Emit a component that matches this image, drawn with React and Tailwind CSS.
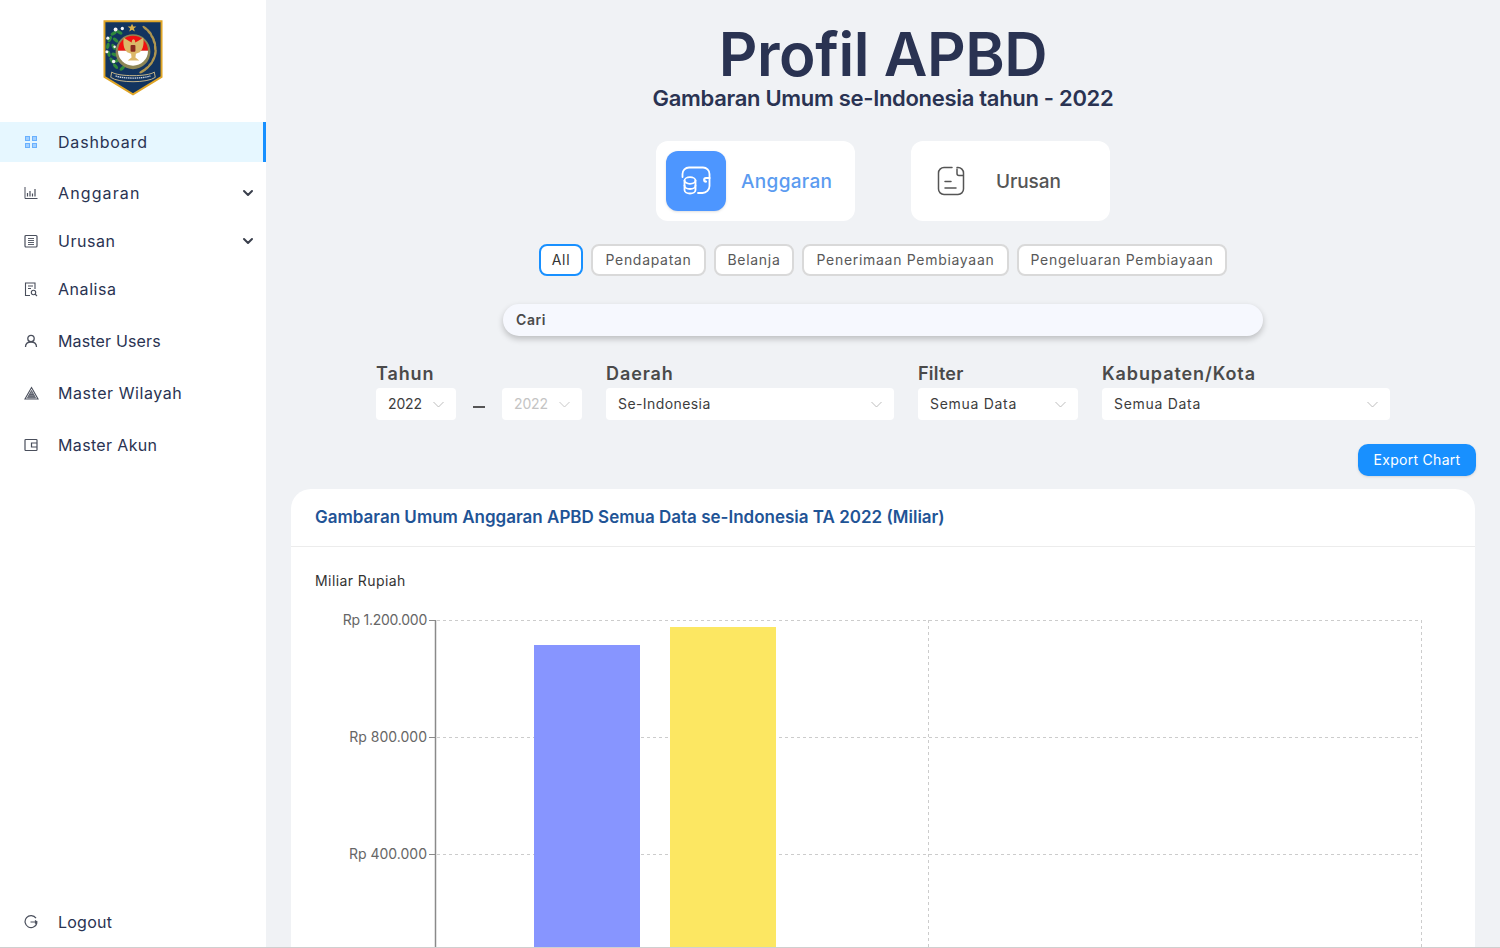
import { ChevronDown } from "lucide-react";

const font = { fontFamily: "Inter, 'Open Sans', sans-serif" };

const greenLeaves = [
  [11, 14, -30], [17, 13, 30], [7, 20, -60], [13, 21, 40], [5, 27, -80], [11, 28, 60],
  [6, 35, 80], [12, 36, 20], [9, 42, 60], [15, 42, -30], [13, 48, 50], [20, 50, -40],
];
const wheat = [
  [44, 9, 40], [48, 13, 50], [51, 18, 60], [53, 23, 70], [54, 29, 85], [54, 35, 100],
  [52, 41, 115], [49, 46, 130], [45, 50, 140], [41, 53, 150],
];
const flowers = [
  [13, 10, 2], [20, 9, 1.7], [5, 19, 1.6], [12, 28, 1.3], [4, 33, 1.6], [11, 43, 1.8], [20, 41, 1.3],
];

function Logo() {
  return (
    <svg width="60" height="78" viewBox="0 0 62 79" className="-mt-[1px]">
      <path d="M1.500 1.500H60.500V59L31 77L1.500 59Z" fill="#12345f" stroke="#e0a526" strokeWidth="2" />
      <path d="M30 4l1.300 3h3.200l-2.600 2 1 3.200L30 10.300l-2.900 1.900 1-3.200-2.600-2h3.200z" fill="#d8b04a" />
      {greenLeaves.map(([x, y, r]) => (
        <ellipse key={`${x}-${y}`} cx={x} cy={y} rx="3.400" ry="1.700" fill="#2f8a3c" transform={`rotate(${r} ${x} ${y})`} />
      ))}
      {flowers.map(([x, y, r]) => (
        <circle key={`${x}-${y}`} cx={x} cy={y} r={r} fill="#f4f4f4" />
      ))}
      {wheat.map(([x, y, r]) => (
        <ellipse key={`${x}-${y}`} cx={x} cy={y} rx="4" ry="1.300" fill="#ad9550" transform={`rotate(${r} ${x} ${y})`} />
      ))}
      <circle cx="31" cy="33" r="18" fill="#8d8656" />
      <path d="M15.500 32a15.500 15.500 0 0 1 31 0z" fill="#f01010" />
      <path d="M15.500 32a15.500 15.500 0 0 0 31 0z" fill="#fff" />
      <path d="M31 20c1.800 0 2.600 1.800 2.200 3.500l3-1.500 5.300-3.500c1 5 .5 11.500-3.500 15l-4 1.500-.5 4 4 3H25.500l4-3-.5-4-4-1.500c-4-3.500-4.500-10-3.500-15l5.300 3.500 3 1.500c-.4-1.700.4-3.500 2.200-3.500z" fill="#dcb868" />
      <rect x="28.500" y="26" width="5" height="7" rx="1" fill="#8a2b20" />
      <path d="M9 54c6 5 38 5 44 0l1 5.500c-8 6-38 6-46 0z" fill="#12345f" stroke="#c9b78a" strokeWidth="1" />
      <path d="M13 58c8 3 28 3 36 0" fill="none" stroke="#c9d2dc" strokeWidth="1.400" strokeDasharray="1.500 .7" />
    </svg>
  );
}

function DashIcon() {
  return (
    <svg width="14" height="14" viewBox="0 0 14 14" fill="#69b1ff">
      <path fillRule="evenodd" d="M1 1h5v5H1zM2 2v3h3V2zM8 1h5v5H8zM9 2v3h3V2zM1 8h5v5H1zM2 9v3h3V9zM8 8h5v5H8zM9 9v3h3V9z" />
      <path d="M2 2h3v3H2zM9 2h3v3H9zM2 9h3v3H2zM9 9h3v3H9z" opacity=".55" />
    </svg>
  );
}

function ChartIcon() {
  return (
    <svg width="14" height="14" viewBox="0 0 14 14" fill="none" stroke="#4a4f5c" strokeWidth="1">
      <path d="M1 1v11.500h12.500" />
      <path d="M3.500 10.500V7M6 10.500V5M8.500 10.500V7.500M11 10.500V3" strokeWidth="1.200" />
    </svg>
  );
}

function ListIcon() {
  return (
    <svg width="14" height="14" viewBox="0 0 14 14" fill="none" stroke="#4a4f5c" strokeWidth="1">
      <rect x="1" y="1.500" width="12" height="11.500" rx="1" strokeWidth="1.200" />
      <path d="M4 4.500h6M4 6.500h6M4 8.500h6M4 10.500h6" strokeWidth=".9" />
    </svg>
  );
}

function ReportIcon() {
  return (
    <svg width="14" height="15" viewBox="0 0 14 15" fill="none" stroke="#4a4f5c" strokeWidth="1.100">
      <path d="M6 13.500H1.500V1h9.500v6" />
      <path d="M4 4h5M4 6.500h3" />
      <circle cx="9.500" cy="10.500" r="2.200" />
      <path d="M11 12l2 2" />
    </svg>
  );
}

function UserIcon() {
  return (
    <svg width="14" height="14" viewBox="0 0 14 14" fill="none" stroke="#4a4f5c" strokeWidth="1.300">
      <circle cx="7" cy="4.500" r="3.200" />
      <path d="M1.500 13c0-3 2.200-5 5.500-5s5.500 2 5.500 5" />
    </svg>
  );
}

function MapIcon() {
  return (
    <svg width="15" height="14" viewBox="0 0 15 14" fill="none" stroke="#4a4f5c">
      <path d="M7.500 1.500L14 13H1z" strokeWidth="1.100" />
      <path d="M7.500 4.500L11.500 11.800H3.500z" fill="#8a8d96" strokeWidth=".8" />
      <path d="M5.500 8.500h4M4.500 10.200h6" strokeWidth=".7" />
    </svg>
  );
}

function WalletIcon() {
  return (
    <svg width="14" height="14" viewBox="0 0 14 14" fill="none" stroke="#4a4f5c" strokeWidth="1.200">
      <rect x="1" y="1.500" width="12" height="11" rx=".8" />
      <path d="M13 5H7.500v4H13" />
    </svg>
  );
}

function LogoutIcon() {
  return (
    <svg width="14" height="14" viewBox="0 0 14 14" fill="none" stroke="#4a4f5c" strokeWidth="1.200">
      <path d="M12 3.200A6 6 0 1 0 12.900 8" />
      <path d="M6.500 7H13M11 5.500L13 7l-2 1.500" />
    </svg>
  );
}

function WalletCoinsIcon() {
  return (
    <svg width="30" height="30" viewBox="0 0 30 30" fill="none" stroke="#fff" strokeWidth="1.800" strokeLinecap="round">
      <path d="M1.500 11V8A6.500 6.500 0 0 1 8 1.500h14A6.500 6.500 0 0 1 28.500 8v12a7 7 0 0 1-7 7H17" />
      <path d="M28.500 12h-3.500a1.800 1.800 0 0 0 0 3.600" strokeWidth="2.200" />
      <ellipse cx="9" cy="14.500" rx="5.500" ry="3.300" />
      <path d="M3.500 14.500V24c0 2 2.500 3.500 5.500 3.500s5.500-1.500 5.500-3.500v-9.500" />
      <path d="M3.500 19.500c0 2 2.500 3.500 5.500 3.500s5.500-1.500 5.500-3.500" />
    </svg>
  );
}

function NoteIcon() {
  return (
    <svg width="28" height="30" viewBox="0 0 28 30" fill="none" stroke="#555" strokeWidth="1.500" strokeLinecap="round">
      <path d="M15 1.500H7A5.500 5.500 0 0 0 1.500 7v16A5.500 5.500 0 0 0 7 28.500h14a5.500 5.500 0 0 0 5.500-5.500V7A5.500 5.500 0 0 0 21 1.500h-1" />
      <path d="M20 3v4.500a2 2 0 0 0 2 2h4" />
      <path d="M8 15.500h6M8 22h11" />
    </svg>
  );
}

function SelectChevron({ muted }) {
  return (
    <svg width="11" height="7" viewBox="0 0 11 7" fill="none" stroke={muted ? "#c8c8c8" : "#bdbdbd"} strokeWidth="1">
      <path d="M.5 1l5 5 5-5" />
    </svg>
  );
}

function NavItem({ icon, label, chevron, active, track = "tracking-[0.035em]", className = "" }) {
  return (
    <div
      className={`flex items-center shrink-0 pl-6 pr-3 text-[16px] text-[#2a3352] ${track} ${className} ${
        active ? "bg-[#e6f7ff] border-r-[3px] border-[#1890ff]" : ""
      }`}
    >
      <span className="w-[34px] flex items-center">{icon}</span>
      <span className="flex-1">{label}</span>
      {chevron && <ChevronDown size={16} strokeWidth={3} className="text-[#3a3f4c] -mr-[2px]" />}
    </div>
  );
}

function Select({ value, width, disabled, track = "tracking-[0.05em]" }) {
  return (
    <div
      className={`h-8 shrink-0 rounded bg-white flex items-center justify-between pl-3 pr-3 text-[14px] ${track} ${width} ${
        disabled ? "text-[#c4c4c4]" : "text-[#3d3d3d]"
      }`}
    >
      <span className="-mt-[2px]">{value}</span>
      <SelectChevron muted={disabled} />
    </div>
  );
}

function Filter({ label, track = "tracking-[0.05em]", children }) {
  return (
    <div className="flex flex-col">
      <div className={`h-[24px] -mt-[2px] mb-[2px] text-[18px] leading-[24px] font-semibold text-[#4a4a4a] ${track}`}>
        {label}
      </div>
      <div className="flex items-center">{children}</div>
    </div>
  );
}

const chips = ["All", "Pendapatan", "Belanja", "Penerimaan Pembiayaan", "Pengeluaran Pembiayaan"];
const chipWidths = ["w-[44px]", "w-[115px]", "w-[80px]", "w-[207px]", "w-[210px]"];

function Chart() {
  const ticks = [
    { y: 620, label: "Rp 1.200.000", spacing: -0.25 },
    { y: 737, label: "Rp 800.000", spacing: 0 },
    { y: 854, label: "Rp 400.000", spacing: 0 },
  ];
  return (
    <svg width="1184" height="360" viewBox="291 600 1184 360" className="block">
      {ticks.map((t) => (
        <g key={t.y}>
          <line x1="437" x2="1421" y1={t.y + 0.5} y2={t.y + 0.5} stroke="#ccc" strokeDasharray="3 3" />
          <line x1="429" x2="435" y1={t.y + 0.5} y2={t.y + 0.5} stroke="#8a8a8a" />
          <text x="427" y={t.y + 5} textAnchor="end" fontSize="14" fill="#666" letterSpacing={t.spacing} style={font}>
            {t.label}
          </text>
        </g>
      ))}
      <line x1="928.500" x2="928.500" y1="620" y2="960" stroke="#ccc" strokeDasharray="3 3" />
      <line x1="1421.500" x2="1421.500" y1="620" y2="960" stroke="#ccc" strokeDasharray="3 3" />
      <line x1="435.500" x2="435.500" y1="620" y2="960" stroke="#8a8a8a" strokeWidth="1.500" />
      <rect x="534" y="645" width="106" height="320" fill="#8795ff" />
      <rect x="670" y="627" width="106" height="340" fill="#fce762" />
    </svg>
  );
}

export default function App() {
  return (
    <div
      className="h-[948px] flex overflow-hidden bg-[#f0f2f5] border-b border-[#cfcfcf]"
      style={font}
    >
      <aside className="w-[266px] shrink-0 bg-white flex flex-col">
        <div className="h-[122px] shrink-0 flex justify-center pt-[20px]">
          <Logo />
        </div>
        <NavItem active icon={<DashIcon />} label="Dashboard" track="tracking-[0.05em]" className="h-10 mb-[7px] pb-[1px]" />
        <NavItem icon={<ChartIcon />} label="Anggaran" chevron track="tracking-[0.07em]" className="h-12" />
        <NavItem icon={<ListIcon />} label="Urusan" chevron className="h-12" />
        <NavItem icon={<ReportIcon />} label="Analisa" className="h-12 mb-2" />
        <NavItem icon={<UserIcon />} label="Master Users" track="tracking-[0.01em]" className="h-10 mb-3" />
        <NavItem icon={<MapIcon />} label="Master Wilayah" className="h-10 mb-3" />
        <NavItem icon={<WalletIcon />} label="Master Akun" track="tracking-[0.022em]" className="h-10" />
        <NavItem icon={<LogoutIcon />} label="Logout" track="tracking-[0.015em]" className="h-10 mt-auto mb-[5px]" />
      </aside>

      <main className="flex-1 flex flex-col items-center min-w-0">
        <h1 className="mt-[26px] h-[56px] shrink-0 text-[60px] leading-[56px] font-semibold tracking-[-0.007em] text-[#2a3352]">
          Profil APBD
        </h1>
        <p className="h-[32px] shrink-0 text-[22px] leading-[32px] font-semibold tracking-[-0.014em] text-[#2a3352]">
          Gambaran Umum se-Indonesia tahun - 2022
        </p>

        <div className="mt-[27px] flex gap-14 shrink-0">
          <div className="w-[199px] h-20 rounded-xl bg-white flex items-center pl-[10px]">
            <div className="w-[60px] h-[60px] rounded-xl bg-[#4d96ff] flex items-center justify-center shadow-sm">
              <WalletCoinsIcon />
            </div>
            <span className="ml-[15px] pt-[2px] text-[19px] font-medium tracking-[0.017em] text-[#5b9bf0]">Anggaran</span>
          </div>
          <div className="w-[199px] h-20 rounded-xl bg-white flex items-center pl-[26px]">
            <NoteIcon />
            <span className="ml-[31px] pt-[2px] text-[19px] font-medium tracking-[-0.005em] text-[#555]">Urusan</span>
          </div>
        </div>

        <div className="mt-[23px] flex gap-2 shrink-0">
          {chips.map((c, i) => (
            <div
              key={c}
              className={`h-8 pb-[2px] rounded-lg border-2 bg-white flex items-center justify-center text-[14px] tracking-[0.05em] ${chipWidths[i]} ${
                i === 0 ? "border-[#1890ff] text-[#333]" : "border-[#d9d9d9] text-[#595959]"
              }`}
            >
              {c}
            </div>
          ))}
        </div>

        <div className="mt-7 w-[760px] h-8 pb-[1px] shrink-0 rounded-full bg-[#f6f8fe] shadow-[0_3px_6px_rgba(0,0,0,0.22)] flex items-center px-[13px] text-[14px] font-semibold tracking-[0.04em] text-[#4a4a4a]">
          Cari
        </div>

        <div className="mt-[28px] flex gap-6 shrink-0">
          <Filter label="Tahun">
            <Select value="2022" width="w-20" track="tracking-[-0.01em]" />
            <div className="w-[46px] flex justify-center pt-[6px]">
              <div className="w-3 h-[2px] bg-[#555]" />
            </div>
            <Select value="2022" width="w-20" track="tracking-[-0.01em]" disabled />
          </Filter>
          <Filter label="Daerah">
            <Select value="Se-Indonesia" width="w-[288px]" track="tracking-[0.03em]" />
          </Filter>
          <Filter label="Filter" track="tracking-[0.012em]">
            <Select value="Semua Data" width="w-40" />
          </Filter>
          <Filter label="Kabupaten/Kota">
            <Select value="Semua Data" width="w-[288px]" />
          </Filter>
        </div>

        <div className="mt-6 w-full flex justify-end pr-6 shrink-0">
          <button className="w-[118px] h-8 pb-[2px] rounded-[10px] bg-[#1890ff] text-white text-[14px] tracking-[0.02em] shadow-sm">
            Export Chart
          </button>
        </div>

        <section className="mt-[13px] w-[1184px] shrink-0 rounded-t-[20px] bg-white">
          <div className="h-[58px] border-b border-[#ececec] flex items-center px-6 text-[17px] font-semibold text-[#1f5496]">
            Gambaran Umum Anggaran APBD Semua Data se-Indonesia TA 2022 (Miliar)
          </div>
          <div className="h-[53px] pt-[24px] px-6 text-[14px] leading-[20px] tracking-[0.03em] text-[#333]">
            Miliar Rupiah
          </div>
          <Chart />
        </section>
      </main>
    </div>
  );
}
